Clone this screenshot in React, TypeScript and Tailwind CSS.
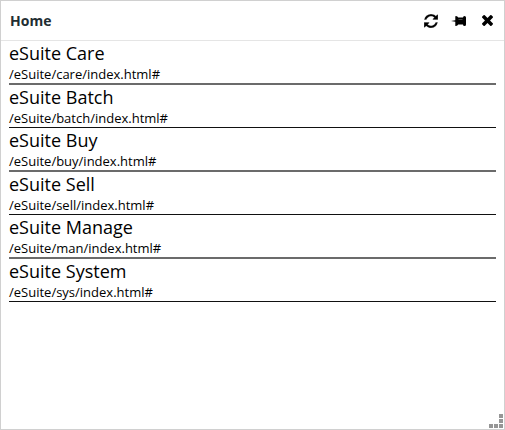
import React from "react";

const suites = [
  { name: "eSuite Care", path: "/eSuite/care/index.html#" },
  { name: "eSuite Batch", path: "/eSuite/batch/index.html#" },
  { name: "eSuite Buy", path: "/eSuite/buy/index.html#" },
  { name: "eSuite Sell", path: "/eSuite/sell/index.html#" },
  { name: "eSuite Manage", path: "/eSuite/man/index.html#" },
  { name: "eSuite System", path: "/eSuite/sys/index.html#" },
];

function RefreshIcon() {
  return (
    <svg viewBox="0 0 1536 1536" className="h-[14px] w-[14px]" fill="currentColor" stroke="white" strokeWidth="30">
      <path d="M1511 928q0 5-1 7-64 268-268 434.500T764 1536q-146 0-282.500-55T238 1324l-129 129q-19 19-45 19t-45-19-19-45V960q0-26 19-45t45-19h448q26 0 45 19t19 45-19 45l-137 137q71 66 161 102t187 36q134 0 250-65t186-179q11-17 53-117 8-23 30-23h192q13 0 22.500 9.500t9.500 22.500zm25-800v448q0 26-19 45t-45 19h-448q-26 0-45-19t-19-45 19-45l138-138Q969 256 768 256q-134 0-250 65T332 500q-11 17-53 117-8 23-30 23H50q-13 0-22.500-9.500T18 608v-7q65-268 270-434.500T768 0q146 0 284 55.500T1297 212l130-129q19-19 45-19t45 19 19 45z" />
    </svg>
  );
}

function PinIcon() {
  return (
    <svg viewBox="0 0 16 10" className="h-[10px] w-[16px]" fill="currentColor">
      <path d="M0 5l4.300-.8V.6Q4.300 0 5 0q1.600.2 2.200 1.500h4.800Q12 0 13.500 0 15 0 15 1.500v7Q15 10 13.500 10 12 10 12 8.500H7.200Q6.600 9.800 5 10q-.7 0-.7-.6V5.800z" />
      <path d="M7.500 3.500h4" stroke="#777" strokeWidth=".6" />
    </svg>
  );
}

function CloseIcon() {
  return (
    <svg viewBox="0 0 1188 1188" className="h-[11px] w-[11px]" fill="currentColor">
      <path d="M1188 956q0 40-28 68l-136 136q-28 28-68 28t-68-28L594 866l-294 294q-28 28-68 28t-68-28L28 1024Q0 996 0 956t28-68l294-294L28 300Q0 272 0 232t28-68L164 28q28-28 68-28t68 28l294 294L888 28q28-28 68-28t68 28l136 136q28 28 28 68t-28 68L866 594l294 294q28 28 28 68z" />
    </svg>
  );
}

export default function App() {
  return (
    <main className="relative h-[430px] w-[505px] border border-[#d0d0d0] bg-white font-['Open_Sans',sans-serif] text-black">
      <header className="flex h-10 items-center justify-between border-b border-[#e5e5e5] pl-[9px] pr-[7px]">
        <h1 className="text-[14px] font-bold text-[#222d32]">Home</h1>
        <div className="flex items-center">
          <button aria-label="Refresh" className="flex w-7 justify-center"><RefreshIcon /></button>
          <button aria-label="Pin" className="flex w-7 justify-center"><PinIcon /></button>
          <button aria-label="Close" className="ml-1 flex w-5 justify-center"><CloseIcon /></button>
        </div>
      </header>
      <ul className="px-2">
        {suites.map((s) => (
          <li key={s.name} className="flex flex-col odd:h-11 odd:border-b-2 odd:border-[#6b6b6b] even:h-[43px] even:border-b even:border-[#111]">
            <div className="h-[25px] text-[18px] leading-[24px]">{s.name}</div>
            <div className="text-[13px] leading-[16px]">{s.path}</div>
          </li>
        ))}
      </ul>
      <svg viewBox="0 0 14 14" className="absolute bottom-px right-px h-[14px] w-[14px]" fill="#969696">
        <path d="M10 0h4v4h-4zM10 5h4v4h-4zM0 10h4v4H0zM5 10h4v4H5zM10 10h4v4h-4z" />
      </svg>
    </main>
  );
}
